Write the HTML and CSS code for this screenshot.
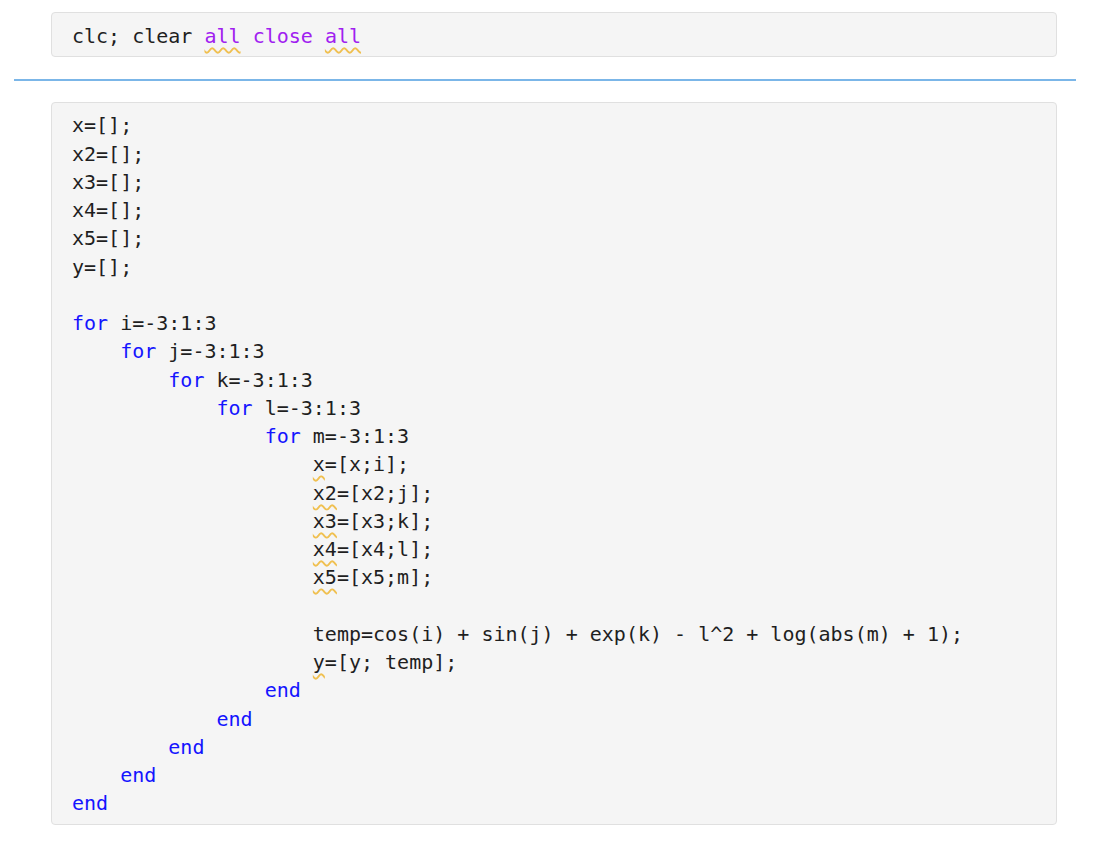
FILE: index.html
```html
<!DOCTYPE html>
<html lang="en">
<head>
  <meta charset="UTF-8">
  <meta name="viewport" content="width=device-width, initial-scale=1.0">
  <title>Script</title>
  <link rel="stylesheet" href="styles.css">
</head>
<body>
  <div class="celula celula-curta">
    <div class="codigo">
      <div class="linha">clc; clear <span class="str typo">all</span> <span class="str">close</span> <span class="str typo">all</span></div>
    </div>
  </div>

  <div class="divisor"></div>

  <div class="celula">
    <div class="codigo">
      <div class="linha">x=[];</div>
      <div class="linha">x2=[];</div>
      <div class="linha">x3=[];</div>
      <div class="linha">x4=[];</div>
      <div class="linha">x5=[];</div>
      <div class="linha">y=[];</div>
      <div class="linha"></div>
      <div class="linha"><span class="kw">for</span> i=-3:1:3</div>
      <div class="linha n1"><span class="kw">for</span> j=-3:1:3</div>
      <div class="linha n2"><span class="kw">for</span> k=-3:1:3</div>
      <div class="linha n3"><span class="kw">for</span> l=-3:1:3</div>
      <div class="linha n4"><span class="kw">for</span> m=-3:1:3</div>
      <div class="linha n5"><span class="typo">x</span>=[x;i];</div>
      <div class="linha n5"><span class="typo">x2</span>=[x2;j];</div>
      <div class="linha n5"><span class="typo">x3</span>=[x3;k];</div>
      <div class="linha n5"><span class="typo">x4</span>=[x4;l];</div>
      <div class="linha n5"><span class="typo">x5</span>=[x5;m];</div>
      <div class="linha"></div>
      <div class="linha n5">temp=cos(i) + sin(j) + exp(k) - l^2 + log(abs(m) + 1);</div>
      <div class="linha n5"><span class="typo">y</span>=[y; temp];</div>
      <div class="linha n4"><span class="kw">end</span></div>
      <div class="linha n3"><span class="kw">end</span></div>
      <div class="linha n2"><span class="kw">end</span></div>
      <div class="linha n1"><span class="kw">end</span></div>
      <div class="linha"><span class="kw">end</span></div>
    </div>
  </div>
</body>
</html>
```

FILE: styles.css
```css
body {
  margin: 0;
  background-color: #fff;
  font-family: "DejaVu Sans Mono", "Liberation Mono", monospace;
}

.celula {
  margin: 0 39px 0 51px;
  background-color: #f5f5f5;
  border: 1px solid #e0e0e0;
  border-radius: 4px;
  padding: 8px 20px 6px 20px;
}

.celula-curta {
  margin-top: 12px;
  padding-top: 9px;
  padding-bottom: 6px;
}

.divisor {
  margin: 22px 20px 21px 14px;
  border-top: 2px solid #7bb6e8;
}

.codigo {
  font-size: 20px;
  line-height: 28.25px;
  color: #1f1f1f;
}

.linha {
  height: 28.25px;
  white-space: pre;
}

/* niveis de indentacao, 4 espacos cada */
.n1 { padding-left: 4ch; }
.n2 { padding-left: 8ch; }
.n3 { padding-left: 12ch; }
.n4 { padding-left: 16ch; }
.n5 { padding-left: 20ch; }

.kw {
  color: #1414ff;
}

.str {
  color: #a020f0;
}

.typo {
  text-decoration: underline wavy #f0c050;
  text-decoration-thickness: 1.5px;
  text-underline-offset: 4px;
}
```
